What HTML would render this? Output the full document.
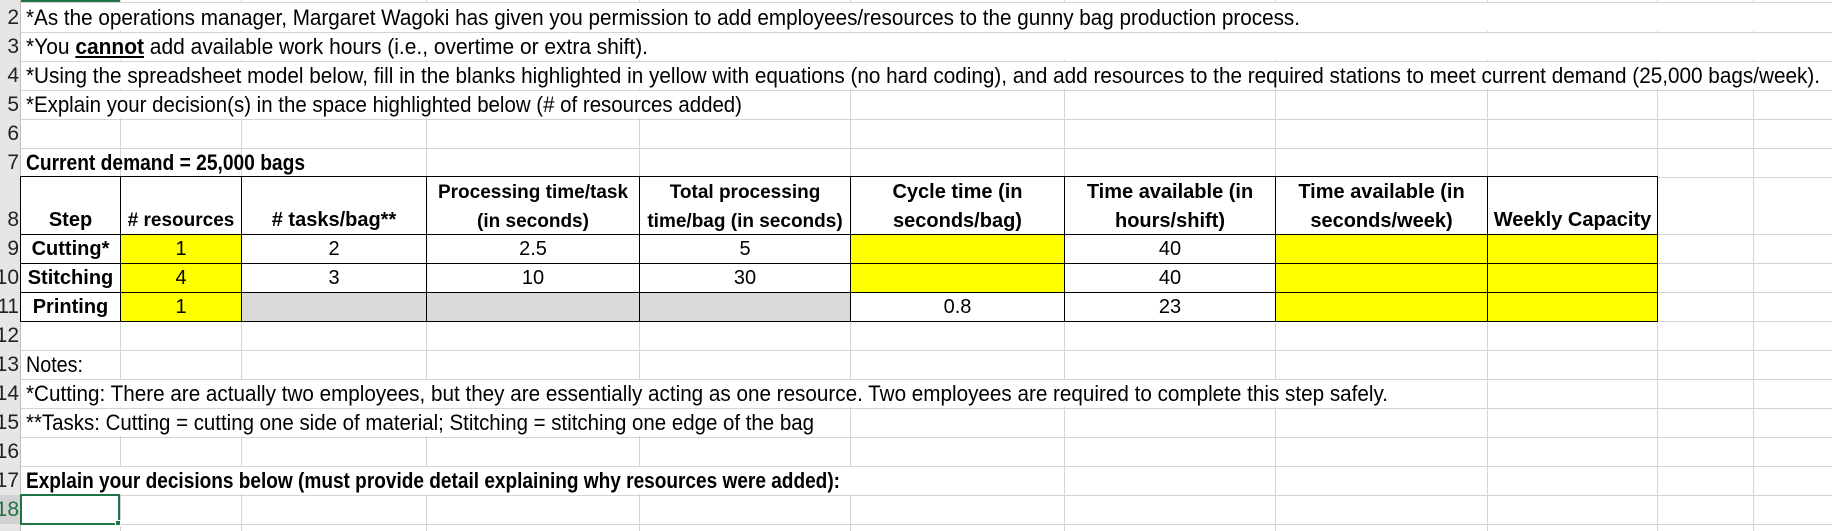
<!DOCTYPE html>
<html><head><meta charset="utf-8"><style>
*{margin:0;padding:0;box-sizing:border-box}
body{width:1832px;height:531px;overflow:hidden;background:#fff;font-family:"Liberation Sans",Arial,sans-serif;font-size:22px;color:#000;position:relative}
.v{position:absolute;width:1px;background:#d4d4d4}
.h{position:absolute;height:1px;background:#d4d4d4;left:0;width:1832px}
.rh{position:absolute;left:0;width:20px;background:#e6e6e6;overflow:hidden;color:#222;font-size:21px;line-height:29px}
.rh span{position:absolute;right:1px;bottom:0;white-space:nowrap}
.t{position:absolute;white-space:nowrap;line-height:29px;transform-origin:0 50%}
.c{position:absolute;border:1px solid #000;text-align:center;white-space:nowrap;overflow:visible;line-height:29px}
.y{background:#ffff00}.g{background:#d9d9d9}
b{font-weight:bold}
</style></head><body>
<div class="v" style="left:120px;top:0;height:531px"></div>
<div class="v" style="left:241px;top:0;height:531px"></div>
<div class="v" style="left:426px;top:0;height:531px"></div>
<div class="v" style="left:639px;top:0;height:531px"></div>
<div class="v" style="left:850px;top:0;height:531px"></div>
<div class="v" style="left:1064px;top:0;height:531px"></div>
<div class="v" style="left:1275px;top:0;height:531px"></div>
<div class="v" style="left:1487px;top:0;height:531px"></div>
<div class="v" style="left:1657px;top:0;height:531px"></div>
<div class="v" style="left:1753px;top:0;height:531px"></div>
<div style="position:absolute;left:21px;top:3px;width:1811px;height:28px;background:#fff"></div>
<div style="position:absolute;left:21px;top:33px;width:1811px;height:27px;background:#fff"></div>
<div style="position:absolute;left:21px;top:62px;width:1811px;height:27px;background:#fff"></div>
<div style="position:absolute;left:21px;top:91px;width:800px;height:27px;background:#fff"></div>
<div style="position:absolute;left:21px;top:380px;width:1380px;height:27px;background:#fff"></div>
<div style="position:absolute;left:21px;top:409px;width:800px;height:27px;background:#fff"></div>
<div style="position:absolute;left:21px;top:467px;width:840px;height:27px;background:#fff"></div>
<div class="h" style="top:2px"></div>
<div class="h" style="top:32px"></div>
<div class="h" style="top:61px"></div>
<div class="h" style="top:90px"></div>
<div class="h" style="top:119px"></div>
<div class="h" style="top:148px"></div>
<div class="h" style="top:177px"></div>
<div class="h" style="top:234px"></div>
<div class="h" style="top:263px"></div>
<div class="h" style="top:292px"></div>
<div class="h" style="top:321px"></div>
<div class="h" style="top:350px"></div>
<div class="h" style="top:379px"></div>
<div class="h" style="top:408px"></div>
<div class="h" style="top:437px"></div>
<div class="h" style="top:466px"></div>
<div class="h" style="top:495px"></div>
<div class="h" style="top:524px"></div>
<div class="rh" style="top:0;height:531px"></div>
<div class="rh" style="top:3px;height:29px"><span>2</span></div>
<div class="rh" style="top:32px;height:29px"><span>3</span></div>
<div class="rh" style="top:61px;height:29px"><span>4</span></div>
<div class="rh" style="top:90px;height:29px"><span>5</span></div>
<div class="rh" style="top:119px;height:29px"><span>6</span></div>
<div class="rh" style="top:148px;height:29px"><span>7</span></div>
<div class="rh" style="top:177px;height:57px"><span>8</span></div>
<div class="rh" style="top:234px;height:29px"><span>9</span></div>
<div class="rh" style="top:263px;height:29px"><span>10</span></div>
<div class="rh" style="top:292px;height:29px"><span>11</span></div>
<div class="rh" style="top:321px;height:29px"><span>12</span></div>
<div class="rh" style="top:350px;height:29px"><span>13</span></div>
<div class="rh" style="top:379px;height:29px"><span>14</span></div>
<div class="rh" style="top:408px;height:29px"><span>15</span></div>
<div class="rh" style="top:437px;height:29px"><span>16</span></div>
<div class="rh" style="top:466px;height:29px"><span>17</span></div>
<div class="rh" style="top:495px;height:29px;background:#d2d2d2;color:#217346"><span>18</span></div>
<div style="position:absolute;left:0;width:21px;top:0;height:531px;border-right:1px solid #bcbcbc"></div>
<div style="position:absolute;left:21px;top:0;width:99px;height:2px;background:#217346"></div>

<div class="t" id="t2" style="left:26px;top:3px">*As the operations manager, Margaret Wagoki has given you permission to add employees/resources to the gunny bag production process.</div>
<div class="t" id="t3" style="left:26px;top:32px">*You <b style="text-decoration:underline">cannot</b> add available work hours (i.e., overtime or extra shift).</div>
<div class="t" id="t4" style="left:26px;top:61px">*Using the spreadsheet model below, fill in the blanks highlighted in yellow with equations (no hard coding), and add resources to the required stations to meet current demand (25,000 bags/week).</div>
<div class="t" id="t5" style="left:26px;top:90px">*Explain your decision(s) in the space highlighted below (# of resources added)</div>
<div class="t" id="t7" style="left:26px;top:148px;font-weight:bold">Current demand = 25,000 bags</div>
<div class="t" id="t13" style="left:26px;top:350px">Notes:</div>
<div class="t" id="t14" style="left:26px;top:379px">*Cutting: There are actually two employees, but they are essentially acting as one resource. Two employees are required to complete this step safely.</div>
<div class="t" id="t15" style="left:26px;top:408px">**Tasks: Cutting = cutting one side of material; Stitching = stitching one edge of the bag</div>
<div class="t" id="t17" style="left:26px;top:466px;font-weight:bold">Explain your decisions below (must provide detail explaining why resources were added):</div>

<div style="position:absolute;left:0;top:0;font-size:20px">
<div class="c" style="left:20px;top:176px;width:101px;height:59px;background:#fff;font-weight:bold;line-height:87px">Step</div>
<div class="c" style="left:120px;top:176px;width:122px;height:59px;background:#fff;font-weight:bold;line-height:87px;font-size:19px">#&nbsp;resources</div>
<div class="c" style="left:241px;top:176px;width:186px;height:59px;background:#fff;font-weight:bold;line-height:87px">#&nbsp;tasks/bag**</div>
<div class="c" style="left:426px;top:176px;width:214px;height:59px;background:#fff;font-weight:bold;padding-top:1px;font-size:19px">Processing time/task<br>(in seconds)</div>
<div class="c" style="left:639px;top:176px;width:212px;height:59px;background:#fff;font-weight:bold;padding-top:1px;font-size:19px">Total processing<br>time/bag (in seconds)</div>
<div class="c" style="left:850px;top:176px;width:215px;height:59px;background:#fff;font-weight:bold;padding-top:1px">Cycle time (in<br>seconds/bag)</div>
<div class="c" style="left:1064px;top:176px;width:212px;height:59px;background:#fff;font-weight:bold;padding-top:1px">Time available (in<br>hours/shift)</div>
<div class="c" style="left:1275px;top:176px;width:213px;height:59px;background:#fff;font-weight:bold;padding-top:1px">Time available (in<br>seconds/week)</div>
<div class="c" style="left:1487px;top:176px;width:171px;height:59px;background:#fff;font-weight:bold;line-height:87px">Weekly Capacity</div>

<div class="c" style="left:20px;top:234px;width:101px;height:30px;background:#fff;font-weight:bold">Cutting*</div>
<div class="c y" style="left:120px;top:234px;width:122px;height:30px">1</div>
<div class="c" style="left:241px;top:234px;width:186px;height:30px;background:#fff">2</div>
<div class="c" style="left:426px;top:234px;width:214px;height:30px;background:#fff">2.5</div>
<div class="c" style="left:639px;top:234px;width:212px;height:30px;background:#fff">5</div>
<div class="c y" style="left:850px;top:234px;width:215px;height:30px"></div>
<div class="c" style="left:1064px;top:234px;width:212px;height:30px;background:#fff">40</div>
<div class="c y" style="left:1275px;top:234px;width:213px;height:30px"></div>
<div class="c y" style="left:1487px;top:234px;width:171px;height:30px"></div>

<div class="c" style="left:20px;top:263px;width:101px;height:30px;background:#fff;font-weight:bold">Stitching</div>
<div class="c y" style="left:120px;top:263px;width:122px;height:30px">4</div>
<div class="c" style="left:241px;top:263px;width:186px;height:30px;background:#fff">3</div>
<div class="c" style="left:426px;top:263px;width:214px;height:30px;background:#fff">10</div>
<div class="c" style="left:639px;top:263px;width:212px;height:30px;background:#fff">30</div>
<div class="c y" style="left:850px;top:263px;width:215px;height:30px"></div>
<div class="c" style="left:1064px;top:263px;width:212px;height:30px;background:#fff">40</div>
<div class="c y" style="left:1275px;top:263px;width:213px;height:30px"></div>
<div class="c y" style="left:1487px;top:263px;width:171px;height:30px"></div>

<div class="c" style="left:20px;top:292px;width:101px;height:30px;background:#fff;font-weight:bold">Printing</div>
<div class="c y" style="left:120px;top:292px;width:122px;height:30px">1</div>
<div class="c g" style="left:241px;top:292px;width:186px;height:30px"></div>
<div class="c g" style="left:426px;top:292px;width:214px;height:30px"></div>
<div class="c g" style="left:639px;top:292px;width:212px;height:30px"></div>
<div class="c" style="left:850px;top:292px;width:215px;height:30px;background:#fff">0.8</div>
<div class="c" style="left:1064px;top:292px;width:212px;height:30px;background:#fff">23</div>
<div class="c y" style="left:1275px;top:292px;width:213px;height:30px"></div>
<div class="c y" style="left:1487px;top:292px;width:171px;height:30px"></div>
</div>

<div style="position:absolute;left:20px;top:494px;width:100px;height:31px;border:2px solid #217346"></div>
<div style="position:absolute;left:115px;top:520px;width:6px;height:6px;background:#217346;border:1px solid #fff"></div>

<script>
var W={t2:1274,t4:1794,t5:716,t7:279,t14:1362,t15:788,t17:814,t3:622,t13:57};
for(var k in W){var e=document.getElementById(k);var w=e.getBoundingClientRect().width;if(w>0)e.style.transform='scaleX('+(W[k]/w)+')';}
</script>
</body></html>
